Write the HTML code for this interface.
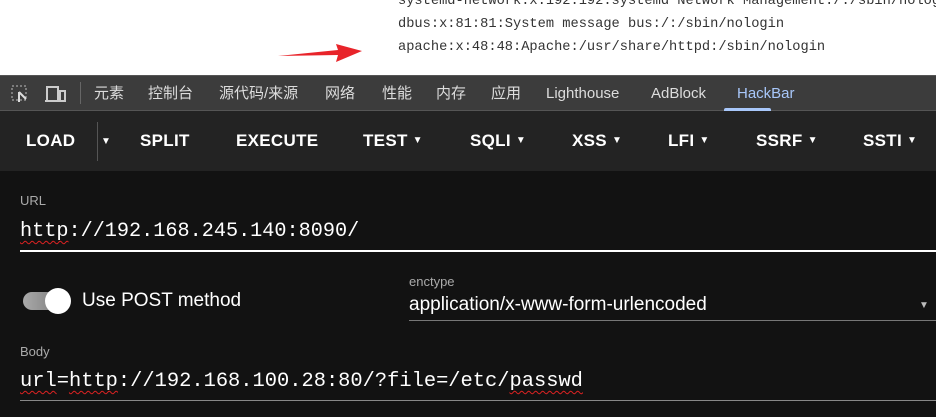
<!DOCTYPE html>
<html><head><meta charset="utf-8"><style>
*{margin:0;padding:0;box-sizing:border-box}
body{width:936px;height:417px;overflow:hidden;background:#121212;font-family:"Liberation Sans","Noto Sans CJK SC",sans-serif;position:relative}
.top{position:absolute;left:0;top:0;width:936px;height:75px;background:#fff}
.mono{font-family:"Liberation Mono",monospace;position:absolute;white-space:nowrap}
.tl{font-size:13.7px;color:#333;left:398px;line-height:16px}
.tabs{position:absolute;top:75px;left:0;width:936px;height:36px;background:#3c3c3c;border-top:1px solid #555;border-bottom:1px solid #555}
.tab{position:absolute;top:9px;font-size:15px;line-height:18px;height:18px;color:#ddd;white-space:nowrap}
.tb{position:absolute;top:111px;left:0;width:936px;height:60px;background:#232323}
.btn{position:absolute;top:131px;font-size:17px;font-weight:bold;color:#fff;letter-spacing:.3px;white-space:nowrap}
.lbl{position:absolute;font-size:13px;color:#aaa}
.sq{text-decoration:underline wavy #d22;text-underline-offset:4px;text-decoration-thickness:1px}
</style></head><body>
<div class="top">
<div class="mono tl" style="top:-6px">systemd-network:x:192:192:systemd Network Management:/:/sbin/nologin</div>
<div class="mono tl" style="top:17px">dbus:x:81:81:System message bus:/:/sbin/nologin</div>
<div class="mono tl" style="top:40px">apache:x:48:48:Apache:/usr/share/httpd:/sbin/nologin</div>
<svg style="position:absolute;left:278px;top:41px" width="85" height="22"><polygon points="0,15 60,9 58,3 84,10 58,21 60,14" fill="#e8242a"/></svg>
</div>
<div class="tabs">
<svg style="position:absolute;left:11px;top:9px" width="20" height="18"><rect x="1" y="1" width="14" height="14" fill="none" stroke="#bbb" stroke-dasharray="2 2"/><path d="M8 7 L8 17 M8 7 L15 14" stroke="#ddd" stroke-width="2"/></svg>
<svg style="position:absolute;left:45px;top:9px" width="22" height="18"><rect x="2" y="2" width="11" height="14" fill="none" stroke="#ccc" stroke-width="2"/><rect x="15" y="6" width="5" height="10" fill="none" stroke="#ccc" stroke-width="2"/><path d="M0 16h14" stroke="#ccc" stroke-width="2"/></svg>
<div style="position:absolute;left:80px;top:6px;width:1px;height:22px;background:#666"></div>
<span class="tab" style="left:94px">元素</span>
<span class="tab" style="left:148px">控制台</span>
<span class="tab" style="left:219px">源代码/来源</span>
<span class="tab" style="left:325px">网络</span>
<span class="tab" style="left:382px">性能</span>
<span class="tab" style="left:436px">内存</span>
<span class="tab" style="left:491px">应用</span>
<span class="tab" style="left:546px">Lighthouse</span>
<span class="tab" style="left:651px">AdBlock</span>
<span class="tab" style="left:737px;color:#a8c7fa">HackBar</span>
<div style="position:absolute;left:724px;top:32px;width:47px;height:3px;background:#a8c7fa;border-radius:2px 2px 0 0"></div>
</div>
<div class="tb"></div>
<div style="position:absolute;left:97px;top:122px;width:1px;height:39px;background:#555"></div>
<span class="btn" style="left:26px">LOAD</span>
<span class="btn" style="left:101px;font-size:10px;top:136px">▼</span>
<span class="btn" style="left:140px">SPLIT</span>
<span class="btn" style="left:236px">EXECUTE</span>
<span class="btn" style="left:363px">TEST <span style="font-size:10px;vertical-align:3px">▼</span></span>
<span class="btn" style="left:470px">SQLI <span style="font-size:10px;vertical-align:3px">▼</span></span>
<span class="btn" style="left:572px">XSS <span style="font-size:10px;vertical-align:3px">▼</span></span>
<span class="btn" style="left:668px">LFI <span style="font-size:10px;vertical-align:3px">▼</span></span>
<span class="btn" style="left:756px">SSRF <span style="font-size:10px;vertical-align:3px">▼</span></span>
<span class="btn" style="left:863px">SSTI <span style="font-size:10px;vertical-align:3px">▼</span></span>
<span class="lbl" style="left:20px;top:193px">URL</span>
<div class="mono" style="left:20px;top:220px;font-size:20.2px;color:#fff"><span class="sq">http</span>://192.168.245.140:8090/</div>
<div style="position:absolute;left:20px;top:250px;width:916px;height:2px;background:#fff"></div>
<div style="position:absolute;left:23px;top:292px;width:42px;height:18px;border-radius:9px;background:linear-gradient(90deg,#aaa,#777)"></div>
<div style="position:absolute;left:45px;top:288px;width:26px;height:26px;border-radius:13px;background:#fff"></div>
<span style="position:absolute;left:82px;top:290px;font-size:19px;color:#fff">Use POST method</span>
<span class="lbl" style="left:409px;top:274px">enctype</span>
<span style="position:absolute;left:409px;top:294px;font-size:19px;color:#fff">application/x-www-form-urlencoded</span>
<span style="position:absolute;left:919px;top:300px;font-size:10px;color:#bbb">▼</span>
<div style="position:absolute;left:409px;top:320px;width:527px;height:1px;background:#777"></div>
<span class="lbl" style="left:20px;top:344px">Body</span>
<div class="mono" style="left:20px;top:370px;font-size:20.4px;color:#fff"><span class="sq">url</span>=<span class="sq">http</span>://192.168.100.28:80/?file=/etc/<span class="sq">passwd</span></div>
<div style="position:absolute;left:20px;top:400px;width:916px;height:1px;background:#888"></div>
</body></html>
